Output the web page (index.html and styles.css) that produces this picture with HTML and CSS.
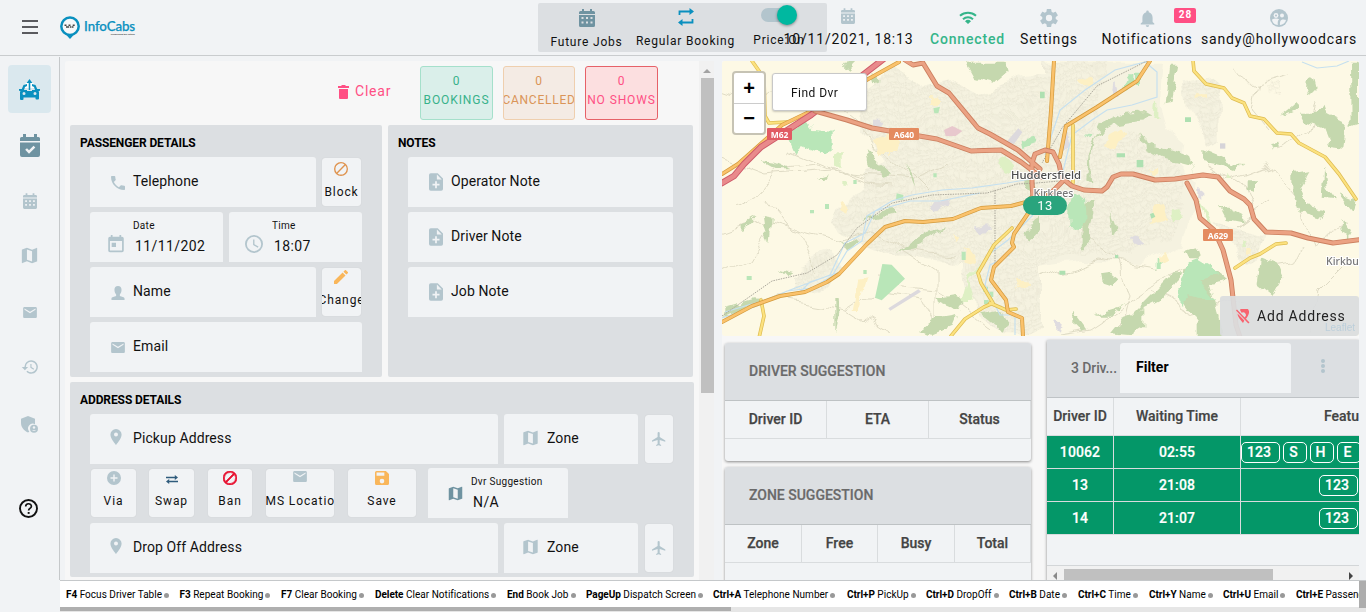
FILE: index.html
```html
<!DOCTYPE html>
<html lang="en">
<head>
<meta charset="utf-8">
<title>InfoCabs</title>
<link rel="stylesheet" href="styles.css">
</head>
<body>
<svg class="defs" width="0" height="0">
  <symbol id="cal" viewBox="0 0 16 18"><path d="M3 0h2v2h6V0h2v2h1.5A1.5 1.5 0 0 1 16 3.500V5H0V3.500A1.500 1.500 0 0 1 1.500 2H3zM0 6h16v10.500a1.500 1.500 0 0 1-1.500 1.500h-13A1.500 1.500 0 0 1 0 16.500zM2.500 8v2h2V8zm4.500 0v2h2V8zm4.500 0v2h2V8zm-9 4.500v2h2v-2zm4.500 0v2h2v-2zm4.500 0v2h2v-2z" fill-rule="evenodd"/></symbol>
  <symbol id="calcheck" viewBox="0 0 20 23"><path d="M3 0h3v3h8V0h3v3h1.500A1.500 1.500 0 0 1 20 4.500V7H0V4.500A1.500 1.500 0 0 1 1.500 3H3zM0 8.500h20V21a2 2 0 0 1-2 2H2a2 2 0 0 1-2-2zm5.200 7.200 3.800 4 6.300-6.300-1.800-1.700L9 16.200l-2-2z" fill-rule="evenodd"/></symbol>
  <symbol id="map" viewBox="2 2 20 20"><path d="M20.500 3l-.16.03L15 5.100 9 3 3.360 4.900c-.21.07-.36.25-.36.48V20.500c0 .28.220.5.500.5l.16-.03L9 18.900l6 2.100 5.640-1.900c.21-.07.36-.25.36-.48V3.500c0-.28-.22-.5-.5-.5zM15 19l-6-2.110V5l6 2.110V19z"/></symbol>
  <symbol id="mail" viewBox="2 4 20 16"><path d="M20 4H4c-1.100 0-1.990.9-1.990 2L2 18c0 1.100.9 2 2 2h16c1.100 0 2-.9 2-2V6c0-1.100-.9-2-2-2zm0 4l-8 5-8-5V6l8 5 8-5v2z"/></symbol>
  <symbol id="history" viewBox="0 2 24 20"><path d="M13.500 3a9 9 0 0 0-9 9H1l4.200 4.200L9.500 12h-3a7 7 0 1 1 2.100 5l-1.420 1.420A9 9 0 1 0 13.500 3zm-1 5v5l4.250 2.520.77-1.280-3.520-2.090V8z"/></symbol>
  <symbol id="phone" viewBox="3 3 18 18"><path d="M6.620 10.790c1.440 2.830 3.760 5.140 6.590 6.590l2.200-2.200c.27-.27.67-.36 1.020-.24 1.120.37 2.330.57 3.570.57.550 0 1 .45 1 1V20c0 .55-.45 1-1 1C10.610 21 3 13.390 3 4c0-.55.45-1 1-1h3.500c.55 0 1 .45 1 1 0 1.250.2 2.450.57 3.570.11.350.03.740-.25 1.020z"/></symbol>
  <symbol id="day" viewBox="2 1 20 22"><path d="M19 3h-1V1h-2v2H8V1H6v2H5a2 2 0 0 0-2 2v14a2 2 0 0 0 2 2h14a2 2 0 0 0 2-2V5a2 2 0 0 0-2-2zm0 16H5V8h14zM7 10h5v5H7z"/></symbol>
  <symbol id="clock" viewBox="2 2 20 20"><path d="M12 2a10 10 0 1 0 0 20 10 10 0 0 0 0-20zm0 18a8 8 0 1 1 0-16 8 8 0 0 1 0 16zm.5-13H11v6l5.200 3.200.8-1.300-4.500-2.700z"/></symbol>
  <symbol id="person" viewBox="0 0 14 15"><path d="M7 0c2.600 0 3.800 1.500 3.800 4 0 2-.8 4-1.800 5v1.800c1.800.7 5 1 5 2.700V15H0v-1.500c0-1.700 3.200-2 5-2.700V9C4 8 3.200 6 3.200 4 3.200 1.500 4.400 0 7 0z"/></symbol>
  <symbol id="note" viewBox="4 2 16 20"><path d="M14 2H6a2 2 0 0 0-2 2v16a2 2 0 0 0 2 2h12a2 2 0 0 0 2-2V8zm2 14h-3v3h-2v-3H8v-2h3v-3h2v3h3zm-3-7V3.500L18.500 9z"/></symbol>
  <symbol id="pin" viewBox="5 2 14 20"><path d="M12 2a7 7 0 0 0-7 7c0 5.250 7 13 7 13s7-7.750 7-13a7 7 0 0 0-7-7zm0 9.500a2.500 2.500 0 1 1 0-5 2.500 2.500 0 0 1 0 5z"/></symbol>
  <symbol id="plane" viewBox="2 2 20 20"><path d="M21 16v-2l-8-5V3.500a1.500 1.500 0 0 0-3 0V9l-8 5v2l8-2.500V19l-2 1.500V22l3.500-1 3.500 1v-1.500L13 19v-5.500z"/></symbol>
  <symbol id="ban" viewBox="2 2 20 20"><path d="M12 2a10 10 0 1 0 0 20 10 10 0 0 0 0-20zM4 12a8 8 0 0 1 12.900-6.300L5.700 16.900A8 8 0 0 1 4 12zm8 8a8 8 0 0 1-4.900-1.700L18.300 7.100A8 8 0 0 1 12 20z"/></symbol>
  <symbol id="pencil" viewBox="3 3 18 18"><path d="M3 17.250V21h3.750L17.810 9.940l-3.750-3.750zM20.710 7.040a1 1 0 0 0 0-1.410l-2.340-2.340a1 1 0 0 0-1.410 0l-1.830 1.830 3.750 3.750z"/></symbol>
  <symbol id="plus" viewBox="2 2 20 20"><path d="M12 2a10 10 0 1 0 0 20 10 10 0 0 0 0-20zm5 11h-4v4h-2v-4H7v-2h4V7h2v4h4z"/></symbol>
  <symbol id="swap" viewBox="0 0 12 9"><path d="M0 1.700h8.800V0L12 2.500 8.800 5V3.200H0zM12 5.800H3.200V4L0 6.500 3.200 9V7.300H12z"/></symbol>
  <symbol id="save" viewBox="3 3 18 18"><path d="M17 3H5a2 2 0 0 0-2 2v14a2 2 0 0 0 2 2h14a2 2 0 0 0 2-2V7zm-5 16a3 3 0 1 1 0-6 3 3 0 0 1 0 6zm3-10H5V5h10z"/></symbol>
</svg>

<header class="top">
  <svg class="burger" viewBox="0 0 16 14"><path d="M0 1h16M0 7h16M0 13h16"/></svg>
  <div class="logo">
    <svg class="logo-mark" viewBox="0 0 20 23"><path d="M10 23 6.300 19h7.400z" fill="#0a90bf"/><circle cx="10" cy="10.200" r="8.700" fill="#f7f8f9" stroke="#0a90bf" stroke-width="2.500"/><path d="M4.500 8.500h2v1.500h-2zM8.500 8.500h2v1.500h-2zM12.700 8.500h2v1.500h-2zM6 10.200h2v1.600H6zM10 10.200h1v1.600h-1zM11.500 10.200h2v1.600h-2zM8 10.200h1.200v1.600H8z" fill="#444"/></svg>
    <div class="logo-words"><span class="logo-name">InfoCabs</span><span class="logo-tag">Mobilising the future</span></div>
  </div>
  <div class="toolbar">
    <div class="tool t1"><svg class="i16" fill="#6f93a1"><use href="#cal"/></svg><span>Future Jobs</span></div>
    <div class="tool t2"><svg class="i16 repeat" viewBox="0 0 16 18"><path d="M1.500 7V3.500H12M14.500 11v3.500H4" fill="none" stroke="#0a90bf" stroke-width="1.800"/><path d="M11.500 0 16 3.500 11.500 7zM4.500 11 0 14.500 4.500 18z" fill="#0a90bf"/></svg><span>Regular Booking</span></div>
    <div class="tool t3"><i class="switch"></i><span>Price:On</span></div>
  </div>
  <div class="stat s-date"><svg fill="#b3c5cd" class="st-cal"><use href="#cal"/></svg><span>10/11/2021, 18:13</span></div>
  <div class="stat s-conn"><svg class="st-wifi" viewBox="0 0 18 13"><path d="M1 4.700a12 12 0 0 1 16 0M4 8.200a7.500 7.500 0 0 1 10 0" fill="none" stroke="#35b58a" stroke-width="2"/><path d="M6 10.200a4.500 4.500 0 0 1 6 0L9 13z" fill="#35b58a"/></svg><span>Connected</span></div>
  <div class="stat s-set"><svg class="st-gear" viewBox="2 2 20 20"><path fill="#b3c5cd" d="M19.430 12.980c.04-.32.07-.64.07-.98s-.03-.66-.07-.98l2.110-1.650c.19-.15.240-.42.120-.64l-2-3.460c-.12-.22-.39-.3-.61-.22l-2.490 1c-.52-.4-1.080-.73-1.690-.98l-.38-2.650A.488.488 0 0 0 14 2h-4c-.25 0-.46.180-.49.420l-.38 2.650c-.61.250-1.170.590-1.690.980l-2.490-1c-.23-.09-.49 0-.61.220l-2 3.460c-.13.220-.07.490.12.640l2.110 1.650c-.04.320-.07.650-.07.980s.03.660.07.980l-2.110 1.650c-.19.150-.24.420-.12.640l2 3.460c.12.220.39.300.61.220l2.490-1c.52.400 1.080.730 1.690.980l.38 2.650c.03.240.240.420.490.420h4c.25 0 .46-.18.490-.42l.38-2.650c.61-.25 1.170-.59 1.690-.98l2.490 1c.23.090.490 0 .61-.22l2-3.460c.12-.22.07-.49-.12-.64l-2.110-1.650zM12 15.500a3.500 3.500 0 1 1 0-7 3.500 3.500 0 0 1 0 7z"/></svg><span>Settings</span></div>
  <div class="stat s-not"><svg class="st-bell" viewBox="4 2 16 20"><path fill="#b3c5cd" d="M12 22a2 2 0 0 0 2-2h-4c0 1.100.9 2 2 2zm6-6v-5c0-3.070-1.640-5.640-4.500-6.320V4a1.500 1.500 0 0 0-3 0v.68C7.630 5.360 6 7.920 6 11v5l-2 2v1h16v-1z"/></svg><span>Notifications</span><b class="badge">28</b></div>
  <div class="stat s-user"><svg class="st-user" viewBox="0 0 18 18"><circle cx="9" cy="9" r="9" fill="#b3c5cd"/><g fill="#f1f3f5"><circle cx="6" cy="6.500" r="2.400"/><circle cx="12" cy="6.500" r="2"/><path d="M2 10.500c2-1 5-1.300 7.300-.2-1.500 1-1.700 2.500-1.500 5.800C4.500 15.700 2.200 13.300 2 10.500zM10 16.100c-.2-3.500.5-5.600 3-5.600 1.300 0 2 .2 3 .6-.6 2.700-3 4.700-6 5z"/></g><circle cx="6" cy="6.500" r="1" fill="#b3c5cd"/></svg><span>sandy@hollywoodcars</span></div>
</header>

<div class="body">
  <nav class="side">
    <a class="nav on"><svg class="n-cab" viewBox="0 0 21 21"><path fill="#fff" d="M10.500 0 15 5l2 4H4l2-4z"/><path fill="#0a90bf" d="M10.500 0 13.500 4h-2.200v7H9.700V4H7.500zM4.500 6 8 5v2L6 8l-1 3h3v1h5v-1h3l-1-3-2-1V5l3.500 1 1.700 4H21v1.700l-1.500.3.500 1v6.500a1 1 0 0 1-1 1h-1.500a1 1 0 0 1-1-1V18.500H4.500V20a1 1 0 0 1-1 1H2a1 1 0 0 1-1-1v-7l.5-1L0 11.700V10h2.800zM5 13a1.500 1.500 0 1 0 0 3 1.500 1.500 0 0 0 0-3zm11 0a1.500 1.500 0 1 0 0 3 1.500 1.500 0 0 0 0-3z"/></svg></a>
    <a class="nav"><svg class="n-check" fill="#6f93a1"><use href="#calcheck"/></svg></a>
    <a class="nav"><svg class="n-cal"><use href="#cal"/></svg></a>
    <a class="nav"><svg class="n-map"><use href="#map"/></svg></a>
    <a class="nav"><svg class="n-mail"><use href="#mail"/></svg></a>
    <a class="nav"><svg class="n-hist"><use href="#history"/></svg></a>
    <a class="nav"><svg class="n-shield" viewBox="0 0 17 17"><path d="M7 0l7 2.700V8.200A4.800 4.800 0 0 0 8.300 15.700L7 16.500C2.800 14.500 0 11 0 7V2.700z"/><circle cx="13" cy="12.700" r="4"/><path d="M11 14.800c.5-1.200 3.500-1.200 4 0z" fill="#f1f3f5"/><circle cx="13" cy="11.500" r="1.200" fill="#f1f3f5"/></svg></a>
    <a class="nav"><svg class="n-help" viewBox="0 0 19 19"><circle cx="9.500" cy="9.500" r="8.500" fill="none" stroke="#111" stroke-width="1.900"/><path d="M6.700 7.500c0-3.700 5.700-3.600 5.700-.2 0 2-2.800 2.200-2.800 4.200" fill="none" stroke="#111" stroke-width="1.700"/><path d="M8.700 13h1.900v1.900H8.700z" fill="#111"/></svg></a>
  </nav>

  <section class="booking">
    <div class="form">
      <div class="summary">
        <div class="clear"><svg viewBox="0 0 11 14"><path d="M1 4h9v9a1 1 0 0 1-1 1H2a1 1 0 0 1-1-1zM0 1h3l1-1h3l1 1h3v2H0z"/></svg>Clear</div>
        <div class="count c-book"><span>0</span><span>BOOKINGS</span></div>
        <div class="count c-canc"><span>0</span><span>CANCELLED</span></div>
        <div class="count c-nosh"><span>0</span><span>NO SHOWS</span></div>
      </div>
      <div class="pair">
        <div class="panel passenger">
          <h2>PASSENGER DETAILS</h2>
          <div class="row">
            <div class="field w226"><svg class="f14"><use href="#phone"/></svg><span>Telephone</span></div>
            <div class="btn w39 blockbtn"><svg class="b14" fill="#df9450"><use href="#ban"/></svg><span>Block</span></div>
          </div>
          <div class="row">
            <div class="field w133 two"><svg class="f-day"><use href="#day"/></svg><div><small>Date</small><span class="clip">11/11/2021</span></div></div>
            <div class="field w133 two time"><svg class="f-clock"><use href="#clock"/></svg><div><small>Time</small><span>18:07</span></div></div>
          </div>
          <div class="row">
            <div class="field w226"><svg class="f14"><use href="#person"/></svg><span>Name</span></div>
            <div class="btn w39"><svg class="b14" fill="#f9b65a"><use href="#pencil"/></svg><span>Change</span></div>
          </div>
          <div class="row"><div class="field w272"><svg class="f-mail"><use href="#mail"/></svg><span>Email</span></div></div>
        </div>
        <div class="panel notes">
          <h2>NOTES</h2>
          <div class="row"><div class="field w265"><svg class="f-note"><use href="#note"/></svg><span>Operator Note</span></div></div>
          <div class="row"><div class="field w265"><svg class="f-note"><use href="#note"/></svg><span>Driver Note</span></div></div>
          <div class="row"><div class="field w265"><svg class="f-note"><use href="#note"/></svg><span>Job Note</span></div></div>
        </div>
      </div>
      <div class="panel address">
        <h2>ADDRESS DETAILS</h2>
        <div class="row">
          <div class="field w408"><svg class="f-pin"><use href="#pin"/></svg><span>Pickup Address</span></div>
          <div class="field w134 zone"><svg class="f-map"><use href="#map"/></svg><span>Zone</span></div>
          <div class="btn fly"><svg class="b14"><use href="#plane"/></svg></div>
        </div>
        <div class="row actions">
          <div class="btn a-via"><svg class="b14"><use href="#plus"/></svg><span>Via</span></div>
          <div class="btn a-swap"><svg class="b-swap" fill="#2f5b7c"><use href="#swap"/></svg><span>Swap</span></div>
          <div class="btn a-ban"><svg class="b14" fill="#e8102f" stroke="#e8102f"><use href="#ban"/></svg><span>Ban</span></div>
          <div class="btn a-sms"><svg class="b-mail"><use href="#mail"/></svg><span>SMS Location</span></div>
          <div class="btn a-save"><svg class="b14" fill="#f9b65a"><use href="#save"/></svg><span>Save</span></div>
          <div class="field two a-dvr"><svg class="f-map2" fill="#6f93a1"><use href="#map"/></svg><div><small>Dvr Suggestion</small><span>N/A</span></div></div>
        </div>
        <div class="row">
          <div class="field w408"><svg class="f-pin"><use href="#pin"/></svg><span>Drop Off Address</span></div>
          <div class="field w134 zone"><svg class="f-map"><use href="#map"/></svg><span>Zone</span></div>
          <div class="btn fly"><svg class="b14"><use href="#plane"/></svg></div>
        </div>
      </div>
    </div>
    <div class="vbar"><i class="up"></i><i class="thumb"></i></div>
  </section>

  <section class="right">
    <div class="mapbox">
      <svg class="mapart" viewBox="722 61 637 275" preserveAspectRatio="none">
        <defs>
          <filter id="rough" x="0" y="0" width="100%" height="100%"><feTurbulence type="fractalNoise" baseFrequency=".07" numOctaves="3" seed="4"/><feDisplacementMap in="SourceGraphic" scale="11" xChannelSelector="R" yChannelSelector="G"/></filter>
          <filter id="bend" x="0" y="0" width="100%" height="100%"><feTurbulence type="fractalNoise" baseFrequency=".03" numOctaves="2" seed="9"/><feDisplacementMap in="SourceGraphic" scale="26" xChannelSelector="R" yChannelSelector="G"/></filter>
          <pattern id="streets" width="47" height="41" patternUnits="userSpaceOnUse" patternTransform="rotate(-12)">
            <path d="M0 6l9-2 7 5 12-4 8 6 11-5M0 17l12-3 9 6M30 17l17 0M0 30l8-4 13 5 9-6 17 5M5 0l3 9-4 12 6 10-5 10M16 5l3 13M27 0l3 8-4 11 5 9-4 13M42 6l3 11-4 11M11 33l8-2 6 8M33 27l6 8M21 5l5 10M34 10l4 8" fill="none" stroke="#dbd8c3" stroke-width=".9"/>
          </pattern>
        </defs>
        <rect x="722" y="61" width="637" height="275" fill="#fdf9e5"/>
        <g filter="url(#bend)">
          <g transform="translate(720 60) scale(.33333)">
            <path fill="#f5f2e0" d="M430 80l90-60 100 60 100-20 60 40 180-60v560l-60 60-120 10-60-60-140-20-90 0-90-40-60-60 20-40 70-60 10-60 60-20-30-60-60-40zM200 640l130-50 40 30-50 50-110 20zM720 620l240-20v220H860l-90-60z"/>
            <path fill="url(#streets)" d="M430 80l90-60 100 60 100-20 60 40 180-60v560l-60 60-120 10-60-60-140-20-90 0-90-40-60-60 20-40 70-60 10-60 60-20-30-60-60-40zM200 640l130-50 40 30-50 50-110 20zM720 620l240-20v220H860l-90-60z"/>
          </g>
          <g transform="translate(1040 60) scale(.33333)">
            <path fill="#f5f2e0" d="M0 5h360l-10 130 20 70 60 50-10 60 60 60-30 90-20 90-130 60-180-10L0 620zM440 70l70-20 50 40-30 30 0 110-30 20-50-100zM520 490l160 30-20 60-60 20z"/>
            <path fill="url(#streets)" d="M0 5h200l-50 200 50 50 60-50 60 30 50 60 80 60-30 90-20 90-130 60-180-10L0 620zM440 70l70-20 50 40-30 30 0 110-30 20-50-100zM520 490l160 30-20 60-60 20zM670 50l50 10 0 60-50-20z"/>
          </g>
          <g fill="none" stroke="#dfdbc5" stroke-width="1">
            <path d="M722 90l35 12 15-12 50 5M722 160l40 15 70-5 35 10M735 205l25-12 20-25 38-4 50 20 20 2M722 235l40-15 35 10 20 40M790 150l60 25 60 5 40-15M722 272l30-15 15-25M820 90l35 30 25 30 30 25 20 20M765 200l25 30 45 12 25-5M840 250l30-20 40 20 40 5M850 310l30-20 40 5 20 40M905 250l30 20 0 60M875 280l60 5 50 40M760 300l30 0 60 10 40 25M1080 230l40 30 10 35-10 40M1155 290l40 20 50-10M1040 280l60-20 60 10M1210 165l35 20 10 25-20 15M1230 180l40-15 30 35 15 40 30-15M1255 80l-5 25 20 25M1290 72l-35 10-20-12M1300 245l-10 20-30 5M1190 270l-40 20-60 40-30 5M1320 100l-10 30-30 20M1270 200l-35 25M1350 260l-30 30-10 40"/>
          </g>
        </g>
        <g filter="url(#rough)">
        <g transform="translate(720 60) scale(.33333)">
          <g fill="#c5d8ae">
            <path d="M738 5h115l10 35-40 34-55-14zM10 740l90-25 30 3-60 30-60 20zM363 548l40-15 20 10-40 30zM430 480l60-30 20-10 18 20-50 15-45 10zM650 710l50-8 40 20-20 30-30-10-35-15zM600 810l50-35 60-10-15 35-60 25zM120 300l40 5 50 20-45 0zM440 270l40 40 40 30-30 10-40-35zM520 575l40-20 60-40 60-10-50 25-40 30zM60 500l50-30-40 42zM125 465l30 5-10 80-15-50zM180 95l60-30-30 50-40 25zM780 760l60-10 20 50-10 25-25-30zM915 520l45-60v50l-30 35zM340 720l10 0 5 40-15 60zM285 350l35-10-10 18zM365 15l50-10-30 30zM180 630l40 10-20 12z"/>
            <path d="M450 40l30 20-20 10zM905 350l30 10 20 45-30-15zM560 310l20 40 5 30-15-35z"/>
          </g>
          <g fill="#b9e6b8"><path d="M200 215l60-30 20 25 55 5v50l-20 20-70-30-15 30zM905 240l35-8 5 20-35 12z"/></g>
          <g fill="#fdf0c4"><path d="M465 240l60-25 15 30-15 40-50 0zM735 570l35 15-5 25-35-10zM415 660l28-5-30 95-15 0zM360 420l20 10-5 30-18-10zM630 105l30 5v25h-30zM885 660l35 0 15 20-40 5zM700 515l18 15-15 15z"/></g>
          <path d="M795 600l-50 45-20 75 30 0-10-60zM830 300l30-15 20 40-30 15zM345 280h20v40h-20zM370 360h15v20h-15z" fill="#def0c4"/>
          <path fill="#dfdcdf" d="M630 430l60-10-10 20-40 15zM770 500l30-10 10 25-30 5zM465 185h20v18h-20z"/>
        </g>
        <g transform="translate(1040 60) scale(.33333)">
          <g fill="#c5d8ae">
            <path d="M390 20l25 0-20 105-18 5zM800 55l20-10 10 40-20 20-12-20zM930 5h27v180l-25 10zM780 155l50 0 20-25 10 30 60 30-10 70-40-5-20-50-55-20zM180 190l60-30 60-5 35 20-60 10-60 10-50 30-10 60 5 90-15-20 5-100zM300 210l20 40 60 15 60 20 30 80-20-50-80-20-60-30zM850 320l10 60 25 35-40-5zM760 340l50-10-30 50 20 55 60 15-20 25-60-15-20-60zM660 590l50 20 20 50-30 55-50-40zM180 640l30-5 25 20-20 20-30-10zM250 770l60-20 0 50-40 25-60-5zM430 630l30-25 50 10 60 50-60 10 30 110 5 50-75 0 0-50-50-70zM100 750l10 20 30 40-20 5-20-20zM160 770l100-30-50 30zM395 640l30 0-60 80-100 50 60-60zM690 250l25-5 5 18-25 2zM900 480l30 40-10 20-15-30zM620 370l25 0 0 25-25-5zM540 440l30 5 40 20 0 25-50-10z"/>
            <path d="M120 450l35-30 15 0-25 100 10 20-30 30 0-60zM490 270l50 20 40 20 30 5-20 15-50-20-50-10zM440 575l30-10 10 30-30 0zM720 170l50-40 0 20zM210 450l20 60-10 20zM895 400l50 20-10 30z"/>
          </g>
          <g fill="#b9e6b8"><path d="M100 395l35 20 5 60-20 30-35-5 0-50zM435 610l40-15 50 30 10 20-60 15 50 60-25 0-50-15-25 30-20-50 30-50zM265 40h15v40l-15 10-15-10zM285 38h15v40h-15zM350 600h15v30h-15zM140 225l15-10-5 20z"/></g>
          <g fill="#fdf0c4"><path d="M205 225l35-20 15 20-30 50-30-10zM340 440l40-5-5 40-40 15zM355 590l20-8 10 20-30 15zM120 60l30-10 0 25-25 0zM625 570h20v20h-20zM320 330l40 0-20 15zM470 100h20v12h-20z"/></g>
          <path fill="#def0c4" d="M345 125l10 5 0 50-15 0zM395 455l20-5 10 30-30 0zM470 410l40 60 10 30-15-10zM610 540h12v25h-12zM560 340l10 20-14 0z"/>
          <path fill="#dfdce0" d="M475 380l15 10 0 25-15 0zM270 530l30 10 10 10-15 10zM50 780l15 10-5 25-12-10zM220 70l15 10v30l-20-10zM70 210l15 40-20 40z"/>
        </g>
        </g>
        <g transform="translate(720 60) scale(.33333)">
          <path fill="#b9e6b8" d="M487 612l28 2 40 42-70 65-20-8zM80 648h15v12H80zM315 432h12v15h-12zM530 400l20 5v14h-22zM640 145l20-5-5 20h-12zM790 680h14v16h-14zM808 695h12v16h-12zM792 720h14v12h-14zM400 360h10v12h-10zM725 575h12v25h-12zM270 450h12v10h-12zM430 630h10v12h-10zM640 340h10v12h-10z"/>
          <path fill="#e8c8cd" d="M672 210l25-12 30 15-20 15-30 0z"/>
          <path fill="#dcd9dd" d="M505 745l90-57 8 7-92 57zM860 245l35-40 12 12-25 35z"/>
        </g>
        <g transform="translate(1040 60) scale(.33333)">
          <path fill="#aee0b1" d="M435 172h18v14h-18zM230 280h25v12h-25zM290 300h20v22h-20zM330 462l10-4 6 12-12 6zM58 632h18v12H58zM225 585h10v10h-10zM0 95h14v20H0z"/>
          <path fill="#d6d4d8" d="M540 250h16v16h-16z"/>
        </g>
        <g fill="none" stroke="#c6e0ef" stroke-width="1.200">
          <path d="M722 318l35-12 30-15 25-3 20-12 15-25 15-10 5-25 25-15 20-6 30-5 30-2 35-5 30-5M725 312l40-12 25-10 40-15 15-32 20-10 10-22 35-10 30 0 40-8M800 292l10-10 30-10M1010 255l-20 10-5 20 15 30 15 0 0 20M1033 215l-25 25-20 15M1045 155l15-45 25-20 30-20 30-8 12 10 0 25-25 8-25 5-15 10-20 15-10 40M1302 62l15 6 20-2 12-5"/>
        </g>
        <path d="M722 316l50-35 35-8 30-18 20-27 35-25 40-8 55-2 30-9 20-1 22-2M995 190v75M1147 61l-50 25-35 42-20 35" fill="none" stroke="#aaa79b" stroke-width="1" stroke-dasharray="1.500 1"/>
        <g fill="none" stroke-linejoin="round" stroke-linecap="round">
          <path stroke="#ddbb50" stroke-width="3.600" d="M761 300l3 16-5 22M752 61l12 17 1 38 4 7 18-1M951 336l14-17 19-12 9-4-12-20-3-10 16-28 18-17M1193 60l1 11 12 13 18 4 8 10 12 5 6 13 14 3 13 14 14 1 8 9 26 14 14 17 17 25M1235 268l15-10 10-4 16-10 10-1M1073 125v58M990 303l16 7 10-1"/>
          <path stroke="#fce27f" stroke-width="2.200" d="M761 300l3 16-5 22M752 61l12 17 1 38 4 7 18-1M951 336l14-17 19-12 9-4-12-20-3-10 16-28 18-17M1193 60l1 11 12 13 18 4 8 10 12 5 6 13 14 3 13 14 14 1 8 9 26 14 14 17 17 25M1235 268l15-10 10-4 16-10 10-1M1073 125v58M990 303l16 7 10-1"/>
          <path stroke="#d39a3c" stroke-width="4" d="M722 322l30-16 14-5 14-5 25-4 22-10 12-8 28-30 18-17 20-6 18 1 30-3 28-11 30-2 15-4 8-7 17 0M1029 212l-15 22-2 9 2 4-20 20-3 13 15 20 2 12 14 6 1 18M722 174l16-10 44-39 25-12 92-51M1054 61l-3 50-4 50M1150 61l-13 20-40 26-31 19-6 31"/>
          <path stroke="#fac26c" stroke-width="2.600" d="M722 322l30-16 14-5 14-5 25-4 22-10 12-8 28-30 18-17 20-6 18 1 30-3 28-11 30-2 15-4 8-7 17 0M1029 212l-15 22-2 9 2 4-20 20-3 13 15 20 2 12 14 6 1 18M722 174l16-10 44-39 25-12 92-51M1054 61l-3 50-4 50M1150 61l-13 20-40 26-31 19-6 31"/>
          <path d="M722 183l12-7 10-12 17-17 50-32 70-54 10-8" stroke="#ce5a69" stroke-width="6.500"/>
          <path d="M722 183l12-7 10-12 17-17 50-32 70-54 10-8" stroke="#e98a8b" stroke-width="4.500"/>
          <path stroke="#cb7f5f" stroke-width="5" d="M905 60l8 5 10-2 14 23 12 7 29 35 12 6 28 16 22 19M815 111l32 9 25 8 65 11 34 12 30-1 20 12 20 15M1032 183v-20l3-9 10-4 8 2 6 12 3 14 10 8 12 4 18 1 5-4 6-10 8-3 12 0 22 6 20-1 28-4 15 2 12 14 14 8 6 6 4 14 12 13 25 1 17 5 25 5 55-7M1187 183l9 17 4 18 14 12 9 20 8 30 5 45 4 12M1032 183l1 15 8 8M1062 182l-14 14"/>
          <path stroke="#eba283" stroke-width="3.300" d="M905 60l8 5 10-2 14 23 12 7 29 35 12 6 28 16 22 19M815 111l32 9 25 8 65 11 34 12 30-1 20 12 20 15M1032 183v-20l3-9 10-4 8 2 6 12 3 14 10 8 12 4 18 1 5-4 6-10 8-3 12 0 22 6 20-1 28-4 15 2 12 14 14 8 6 6 4 14 12 13 25 1 17 5 25 5 55-7M1187 183l9 17 4 18 14 12 9 20 8 30 5 45 4 12M1032 183l1 15 8 8M1062 182l-14 14"/>
        </g>
        <rect x="767" y="128" width="25" height="12" rx="1" fill="#e15b63"/><rect x="889" y="128" width="30" height="12" rx="1" fill="#e48b5f"/><rect x="1203" y="229" width="30" height="12" rx="1" fill="#e48b5f"/>
        <g class="shield"><text x="779.500" y="137.500">M62</text><text x="904" y="137.500">A640</text><text x="1218" y="239">A629</text></g>
        <text class="town" x="1046" y="179">Huddersfield</text><text class="area" x="1053.500" y="197">Kirklees</text><text class="area kb" x="1326" y="265">Kirkburton</text>
      </svg>
      <div class="zoomer"><b>+</b><b>−</b></div>
      <div class="find">Find Dvr</div>
      <div class="cluster">13</div>
      <div class="addaddr"><svg viewBox="0 0 14 15"><path d="M4 1a4.800 4.800 0 0 1 8.500 4.500C12 7 11 8.500 10 9.800L8.600 8.300a2 2 0 1 0-3-4.500zM1.500 4.500l6.800 7L7 14C4.500 11 1.500 8 1.500 4.500zM1 .5l12.500 13-1.200 1L0 1.500z" fill="#f8646f"/></svg>Add Address</div>
      <span class="leaflet">Leaflet</span>
    </div>
    <div class="tables">
      <div class="suggest">
        <div class="card dcard">
          <h3>DRIVER SUGGESTION</h3>
          <div class="thead three"><span>Driver ID</span><span>ETA</span><span>Status</span></div>
        </div>
        <div class="card zcard">
          <h3>ZONE SUGGESTION</h3>
          <div class="thead four"><span>Zone</span><span>Free</span><span>Busy</span><span>Total</span></div>
        </div>
      </div>
      <div class="drivers">
        <div class="dhead"><span class="dcount">3 Driv...</span><div class="filter">Filter</div><i class="dots"></i></div>
        <div class="drow dth"><span>Driver ID</span><span>Waiting Time</span><span class="feat">Features</span></div>
        <div class="drow g"><span>10062</span><span>02:55</span><span class="tags"><em class="wide">123</em><em>S</em><em>H</em><em>E</em></span></div>
        <div class="drow g"><span>13</span><span>21:08</span><span class="tags late"><em class="wide">123</em></span></div>
        <div class="drow g"><span>14</span><span>21:07</span><span class="tags late"><em class="wide">123</em></span></div>
        <div class="hbar"><i class="lft"></i><i class="hthumb"></i><i class="rgt"></i></div>
      </div>
    </div>
  </section>
</div>

<footer class="keys">
  <div class="keylist">
    <p><b>F4</b> Focus Driver Table<i></i></p><p><b>F3</b> Repeat Booking<i></i></p><p><b>F7</b> Clear Booking<i></i></p><p><b>Delete</b> Clear Notifications<i></i></p><p><b>End</b> Book Job<i></i></p><p><b>PageUp</b> Dispatch Screen<i></i></p><p><b>Ctrl+A</b> Telephone Number<i></i></p><p><b>Ctrl+P</b> PickUp<i></i></p><p><b>Ctrl+D</b> DropOff<i></i></p><p><b>Ctrl+B</b> Date<i></i></p><p><b>Ctrl+C</b> Time<i></i></p><p><b>Ctrl+Y</b> Name<i></i></p><p><b>Ctrl+U</b> Email<i></i></p><p class="last"><b>Ctrl+E</b> Passengers</p>
    <i class="vthumb"></i>
  </div>
  <div class="fbar"><i></i></div>
</footer>
</body>
</html>
```
FILE: styles.css
```css
* { box-sizing: border-box; }
body { margin: 0; width: 1366px; height: 612px; overflow: hidden; background: #f1f3f5; color: #111; font-family: Roboto, "Liberation Sans", sans-serif; display: flex; flex-direction: column; }
svg { display: block; flex: none; }
.defs { position: absolute; }
i, em { font-style: normal; }

/* header */
.top { height: 56px; flex: none; border-bottom: 1px solid #c9ccce; display: flex; }
.burger { width: 16px; height: 14px; margin: 20px 22px 0; stroke: #5a5a5e; stroke-width: 2; }
.logo { display: flex; width: 478px; padding-top: 16px; gap: 3px; }
.logo-mark { width: 20px; height: 23px; }
.logo-words { display: flex; flex-direction: column; align-items: flex-end; width: 52px; padding-top: 3px; height: 24px; }
.logo-name { font: 500 13.300px/14px Lato, sans-serif; color: #0a90bf; -webkit-text-stroke: .25px #0a90bf; letter-spacing: -.1px; }
.logo-tag { font: 700 2.600px/3px Lato, sans-serif; color: #444; }
.toolbar { width: 289px; height: 49px; margin-top: 3px; background: #dcdfe2; border-radius: 2px; display: flex; font-size: 12px; letter-spacing: .8px; flex: none; }
.tool { display: flex; flex-direction: column; align-items: center; white-space: nowrap; line-height: 14px; }
.tool .i16 { width: 16px; height: 18px; margin-bottom: 5px; }
.t1 { width: 97px; padding-top: 6px; }
.t1 span { margin-top: 3px; }
.t2 { width: 101px; padding-top: 5px; }
.t2 span { margin-top: 3px; }
.t3 { width: 86px; padding-top: 5px; }
.switch { width: 31px; height: 14px; border-radius: 7px; background: #b3c5cd; display: block; margin-left: -5px; position: relative; margin-bottom: 11px; }
.switch::after { content: ""; position: absolute; width: 20px; height: 20px; border-radius: 50%; background: #00b8a0; left: 16px; top: -3px; box-shadow: 0 1px 3px rgba(0,0,0,.4); }
.stat { display: flex; flex-direction: column; align-items: center; font-size: 14px; line-height: 16px; letter-spacing: .85px; white-space: nowrap; flex: none; position: relative; height: 55px; justify-content: space-between; padding: 8px 0 8px; }
.s-date { width: 129px; margin-left: -43px; }
.s-conn { width: 75px; margin-left: 17px; color: #35b58a; font-weight: 500; }
.s-set { width: 58px; margin-left: 15px; }
.s-not { width: 92px; margin-left: 23px; }
.s-user { width: 156px; margin-left: 8px; }
.st-cal { width: 14px; height: 16px; margin-right: 2px; }
.st-wifi { width: 18px; height: 13px; margin: 3px 0 0 1px; }
.st-gear { width: 18px; height: 18px; margin-top: 1px; }
.st-bell { width: 15px; height: 17px; margin-top: 2px; }
.st-user { width: 18px; height: 18px; margin-top: 1px; }
.badge { position: absolute; left: 73px; top: 8px; width: 22px; height: 15px; background: #ff4f84; color: #fff; border-radius: 2px; font: 700 10px/14px Roboto; letter-spacing: 1px; text-align: center; padding-left: 1px; }

/* sidebar */
.body { display: flex; height: 524px; flex: none; overflow: hidden; }
.side { width: 60px; flex: none; border-right: 1px solid #c5c8ca; margin-top: 1px; padding-top: 8px; fill: #b3c5cd; }
.nav { display: flex; width: 43px; height: 48px; margin: 0 0 8px 8px; align-items: center; justify-content: center; }
.nav.on { background: #dae8ee; border-radius: 4px; }
.n-cab { width: 21px; height: 21px; margin-top: 1px; }
.n-check { width: 20px; height: 23px; }
.n-cal { width: 14px; height: 16px; }
.n-map { width: 17px; height: 17px; margin-top: -4px; }
.n-mail { width: 14px; height: 11px; margin-top: -2px; }
.n-hist { width: 18px; height: 16px; margin-top: -5px; }
.n-shield { width: 17px; height: 17px; margin-top: -2px; }
.n-help { width: 19px; height: 19px; margin: 55px 2px 0 0; }

/* booking form */
.booking { width: 655px; margin: 5px 0 0 5px; display: flex; flex: none; }
.form { width: 634px; background: #f7f7f7; padding: 5px 5px 0; border-radius: 3px 0 0 0; }
.summary { display: flex; height: 54px; padding-left: 268px; }
.clear { display: flex; align-items: center; gap: 6px; color: #ff4f84; font-size: 14px; letter-spacing: .8px; width: 82px; height: 50px; }
.clear svg { width: 11px; height: 14px; fill: #ff4f84; margin-top: 2px; }
.count { width: 73px; height: 54px; border: 1px solid; border-radius: 3px; display: flex; flex-direction: column; align-items: center; font-size: 12px; line-height: 19px; letter-spacing: .9px; padding-top: 5px; overflow: hidden; white-space: nowrap; }
.c-book { background: #daefea; border-color: #a5e0cb; color: #37b28a; }
.c-canc { width: 72px; margin: 0 10px; background: #f4ebe4; border-color: #efcfae; color: #da9558; letter-spacing: .75px; }
.c-nosh { background: #fcdfe0; border-color: #e66168; color: #ff4f84; }
.pair { display: flex; gap: 6px; margin-top: 5px; }
.panel { background: #dcdfe2; border-radius: 2px; padding: 10px 0 0 20px; }
.passenger { width: 312px; height: 252px; }
.notes { width: 305px; height: 252px; }
.address { height: 195px; margin-top: 5px; }
h2 { margin: 0 0 5px -10px; font-size: 12px; line-height: 17px; font-weight: 700; letter-spacing: -.1px; color: #000; }
.row { display: flex; gap: 6px; margin-bottom: 5px; }
.field { height: 50px; background: #f1f3f5; border-radius: 3px 3px 0 0; display: flex; align-items: center; font-size: 14px; line-height: 18px; padding-left: 21px; letter-spacing: .1px; fill: #b3c5cd; padding-bottom: 2px; flex: none; }
.field > span { margin-left: 8px; }
.w226 { width: 226px; } .w133 { width: 133px; } .w272 { width: 272px; } .w265 { width: 265px; } .w408 { width: 408px; } .w134 { width: 134px; }
.f14 { width: 14px; height: 14px; margin-top: 3px; }
.f-mail { width: 14px; height: 11px; margin-top: 2px; }
.f-note { width: 14px; height: 18px; margin-top: 2px; }
.f-pin { width: 12px; height: 16px; margin: -2px 1px 0 0; }
.w408 { padding-left: 20px; }
.w408 > span { margin-left: 10px; }
.zone { padding-left: 18px; }
.f-map { width: 17px; height: 16px; margin-top: -1px; }
.two { padding: 4px 0 0; align-items: flex-start; }
.two small { display: block; font-size: 10px; line-height: 20px; letter-spacing: .3px; height: 21px; }
.two div { width: 72px; overflow: hidden; }
.two div span { display: block; padding-left: 2px; letter-spacing: .4px; }
.f-day { width: 18px; height: 19px; margin: 19px 8px 0 17px; }
.f-clock { width: 18px; height: 18px; margin: 19px 9px 0 16px; }
.f-map2 { width: 15px; height: 15px; margin: 14px 8px 0 20px; }
.btn { height: 48px; margin-top: 1px; background: #f1f3f5; border-radius: 3px; box-shadow: 0 0 1px rgba(0,0,0,.15); display: flex; flex-direction: column; align-items: center; overflow: hidden; font-size: 12px; line-height: 14px; letter-spacing: .9px; white-space: nowrap; fill: #b3c5cd; flex: none; padding-top: 2px; }
.w39 { width: 39px; }
.blockbtn { padding-top: 4px; }
.b14 { width: 14px; height: 14px; }
.w39 .b14 { margin-right: 2px; }
.btn span { margin-top: 9px; }
.fly { width: 28px; margin-left: 1px; padding-top: 17px; }
.actions { gap: 0; margin: -1px 0 4px 1px; height: 51px; padding-top: 1px; }
.actions .field { margin-top: -1px; }
.actions .btn { margin-top: 0; }
.a-via { width: 45px; }
.a-swap { width: 45px; margin-left: 13px; }
.a-ban { width: 44px; margin-left: 14px; }
.a-sms { width: 68px; margin-left: 14px; }
.a-save { width: 68px; margin-left: 14px; }
.a-dvr { width: 140px; margin-left: 12px; }
.a-dvr div { width: 80px; }
.b-swap { width: 12px; height: 9px; margin: 4px 0 1px; }
.b-mail { width: 14px; height: 11px; margin-bottom: 3px; }
.vbar { width: 15px; background: #f1f1f1; padding: 8px 0 0 2px; }
.up { display: block; width: 0; border: 4px solid transparent; border-top: 0; border-bottom: 4px solid #a3a3a3; margin-left: 2px; }
.thumb { display: block; width: 13px; height: 315px; background: #c0c0c0; margin-top: 5px; }

/* map */
.right { width: 637px; margin: 5px 0 0 2px; flex: none; overflow: hidden; background: #f7f7f7; }
.mapbox { height: 275px; position: relative; overflow: hidden; border-radius: 3px; }
.mapart { width: 637px; height: 275px; }
.shield { font: 700 8.500px "Noto Sans", sans-serif; fill: #fff; text-anchor: middle; }
.town, .area { font: 500 11.500px "Noto Sans", sans-serif; fill: #4c4c4c; text-anchor: middle; stroke: #fff; stroke-width: 2px; paint-order: stroke; }
.town { font-size: 11.300px; }
.area { font-size: 10.500px; fill: #777; }
.kb { text-anchor: start; }
.zoomer { position: absolute; left: 10px; top: 10px; width: 34px; height: 64px; border: 2px solid #c6c3b4; border-radius: 4px; background: #fff; }
.zoomer b { display: block; height: 30px; font: 700 20px/30px "Liberation Sans"; text-align: center; color: #000; }
.zoomer b + b { border-top: 1px solid #ccc; line-height: 28px; }
.find { position: absolute; left: 50px; top: 12px; width: 95px; height: 38px; border: 1px solid #c8c8c8; border-radius: 3px; background: #fff; font-size: 12px; line-height: 38px; padding-left: 18px; letter-spacing: .45px; box-shadow: 0 1px 2px rgba(0,0,0,.2); }
.cluster { position: absolute; left: 301px; top: 135px; width: 44px; height: 19px; border-radius: 10px; background: #2aa47d; color: #fff; text-align: center; font-size: 13px; line-height: 19px; letter-spacing: .5px; }
.addaddr { position: absolute; right: 0; bottom: 0; width: 139px; height: 40px; background: rgba(218,221,223,.93); border-radius: 3px; display: flex; align-items: center; gap: 7px; padding-left: 16px; font-size: 14px; letter-spacing: .8px; color: #222; white-space: nowrap; }
.addaddr svg { width: 14px; height: 15px; }
.leaflet { position: absolute; right: 4px; bottom: 2px; font: 10px/12px "Liberation Sans"; color: #bccfda; }

/* tables */
.tables { display: flex; padding-left: 3px; height: 244px; }
.suggest { width: 306px; padding-top: 7px; flex: none; }
.card { width: 306px; background: #f1f3f5; border-radius: 3px; box-shadow: 0 1px 3px rgba(0,0,0,.45); color: #444; }
.dcard { height: 118px; margin-bottom: 6px; }
.zcard { height: 150px; }
h3 { margin: 0; height: 58px; background: #dcdfe2; border-bottom: 1px solid #bec2c4; border-radius: 3px 3px 0 0; font-size: 14px; font-weight: 500; line-height: 56px; padding-left: 24px; color: #6a6a6a; -webkit-text-stroke: .2px #6a6a6a; }
.thead { display: grid; height: 38px; border-bottom: 1px solid #d9dcde; font-size: 14px; font-weight: 500; line-height: 37px; text-align: center; -webkit-text-stroke: .25px #444; }
.three { grid-template-columns: 102px 102px 102px; }
.four { grid-template-columns: 77px 76px 77px 76px; }
.thead span { border-right: 1px solid #d9dcde; }
.drivers { width: 312px; margin: 4px 0 0 16px; background: #f1f3f5; box-shadow: 0 1px 3px rgba(0,0,0,.45); flex: none; overflow: hidden; height: 260px; }
.dhead { height: 58px; background: #dcdfe2; border-bottom: 1px solid #bfc3c6; display: flex; color: #6a6a6a; font-size: 14px; font-weight: 500; line-height: 56px; }
.dcount { width: 73px; padding-left: 24px; letter-spacing: -.1px; white-space: nowrap; }
.filter { width: 171px; height: 50px; margin-top: 3px; background: #f1f3f5; border-radius: 3px 3px 0 0; color: #000; font-weight: 700; line-height: 49px; padding-left: 16px; }
.dots { width: 4px; height: 4px; border-radius: 50%; background: #b3c5cd; margin: 24px 0 0 30px; box-shadow: 0 -5px #b3c5cd, 0 5px #b3c5cd; }
.drow { display: grid; grid-template-columns: 67px 127px 118px; height: 33px; text-align: center; font-size: 14px; font-weight: 500; line-height: 33px; border-bottom: 1px solid #d9dcde; }
.drow > span { border-right: 1px solid #d9dcde; white-space: nowrap; }
.drow > span:last-child { border: 0; }
.dth { height: 38px; line-height: 37px; color: #444; -webkit-text-stroke: .2px #444; }
.feat { text-align: left; padding-left: 83px; overflow: hidden; }
.g { background: #049768; color: #fff; letter-spacing: .1px; -webkit-text-stroke: .2px #fff; }
.tags { display: flex; gap: 3px; align-items: center; overflow: hidden; }
.tags em { width: 24px; height: 21px; border: 1px solid #fff; border-radius: 5px; line-height: 19px; flex: none; padding-right: 3px; }
.tags em.wide { width: 39px; padding-right: 3px; }
.late { padding-left: 78px; }
.hbar { border-top: 1px solid #d3d6d8; margin-top: 30px; background: #f1f1f1; height: 20px; display: flex; align-items: flex-start; padding: 3px 6px 0 6px; }
.hthumb { width: 209px; height: 16px; background: #c0c0c0; margin-left: 7px; }
.lft, .rgt { border: 4px solid transparent; margin-top: 3px; border-left: 0; border-right-color: #8a8a8a; width: 0; }
.rgt { border: 4px solid transparent; border-right: 0; border-left-color: #444; margin-left: 76px; }

/* shortcut bar */
.keys { height: 32px; margin-left: 60px; border-top: 1px solid #c5c8ca; background: #fff; flex: none; }
.keylist { height: 26px; display: grid; grid-template-columns: 113.500px 101.500px 94px 132px 79px 127px 134px 79px 83px 69px 71px 74px 73px 63px 7px; padding-left: 6px; font-size: 10px; line-height: 27px; color: #000; letter-spacing: .03px; white-space: nowrap; }
.keylist p { margin: 0; }
.keylist b { letter-spacing: -.05px; }
.keylist p i { display: inline-block; width: 5px; height: 5px; border-radius: 50%; background: #999; margin-left: 2px; vertical-align: .5px; }
.last { overflow: hidden; }
.vthumb { background: #adadad; }
.fbar { height: 5px; background: #e6e6e6; }
.fbar i { display: block; width: 671px; height: 4px; background: #afafaf; }
```
